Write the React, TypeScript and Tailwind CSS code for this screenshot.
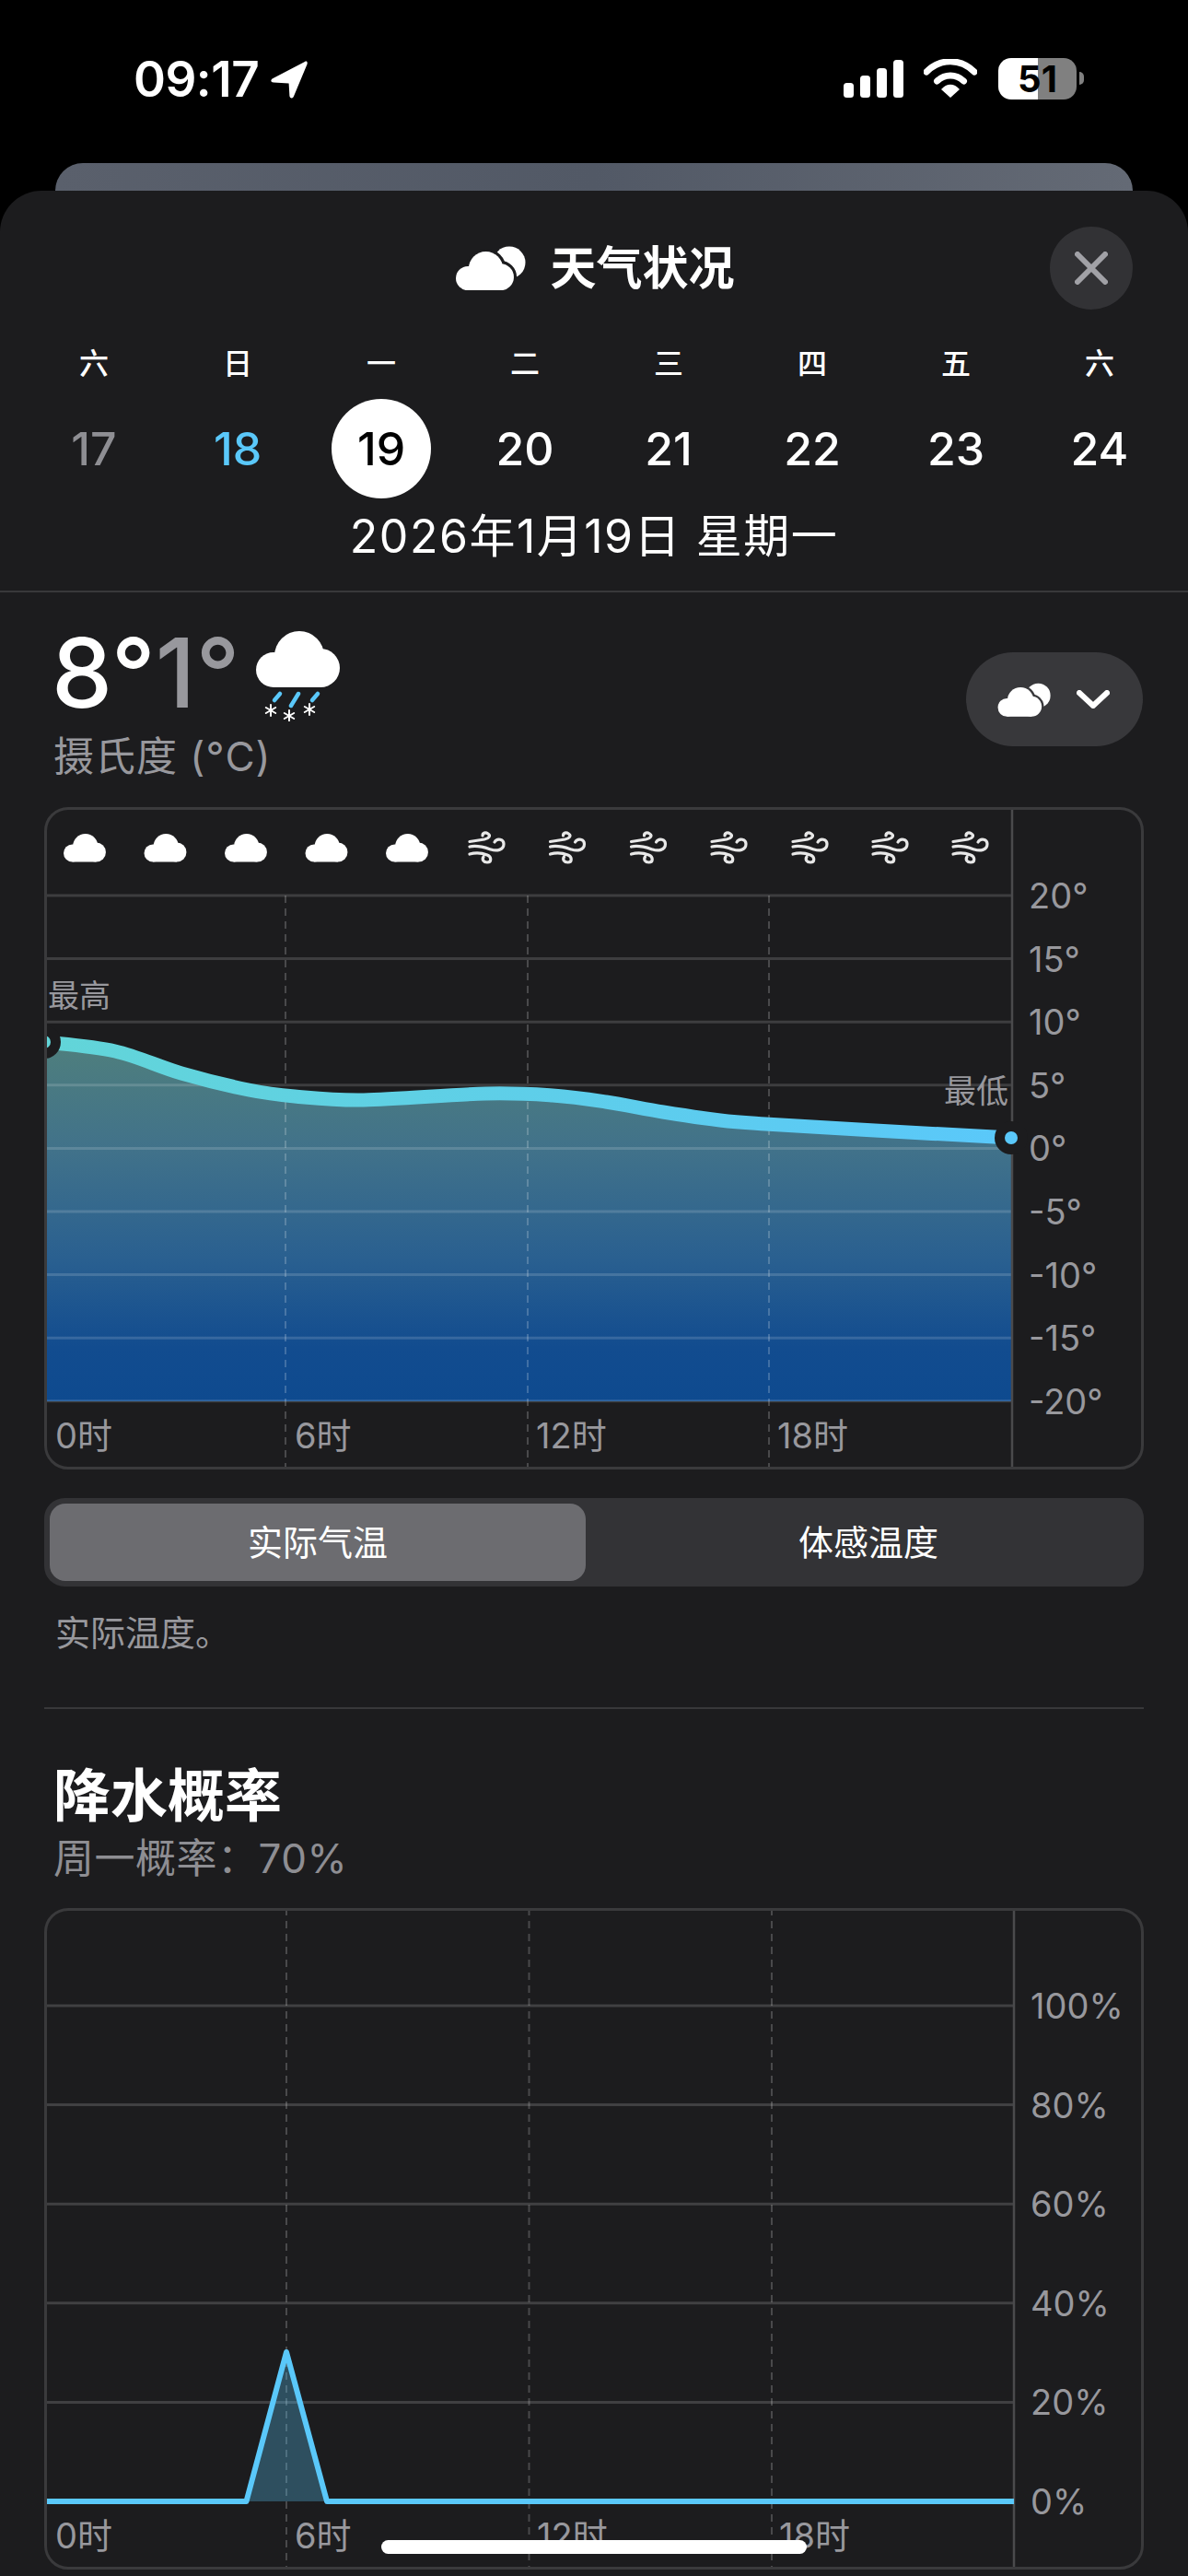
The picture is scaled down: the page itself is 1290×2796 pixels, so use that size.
const weekdays = ['六', '日', '一', '二', '三', '四', '五', '六'];
const days = [17, 18, 19, 20, 21, 22, 23, 24];

const tempLabels = ['20°', '15°', '10°', '5°', '0°', '-5°', '-10°', '-15°', '-20°'];
const rainLabels = ['100%', '80%', '60%', '40%', '20%', '0%'];

// hand read from the curve, page coordinates
const tempPoints: [number, number][] = [
  [48, 1131], [125, 1141], [197, 1165], [270, 1183], [320, 1190],
  [395, 1194], [527, 1187], [600, 1189], [658, 1196], [720, 1207], [782, 1216],
  [831, 1220], [950, 1227], [1098, 1235],
];

function smoothPath(pts: [number, number][]) {
  let d = `M${pts[0][0]} ${pts[0][1]}`;
  for (let i = 0; i < pts.length - 1; i++) {
    const p0 = pts[i - 1] ?? pts[i];
    const p1 = pts[i];
    const p2 = pts[i + 1];
    const p3 = pts[i + 2] ?? p2;
    const c1x = p1[0] + (p2[0] - p0[0]) / 6;
    const c1y = p1[1] + (p2[1] - p0[1]) / 6;
    const c2x = p2[0] - (p3[0] - p1[0]) / 6;
    const c2y = p2[1] - (p3[1] - p1[1]) / 6;
    d += ` C${c1x} ${c1y} ${c2x} ${c2y} ${p2[0]} ${p2[1]}`;
  }
  return d;
}

const tempLine = smoothPath(tempPoints);

function CloudParts(props: React.SVGProps<SVGGElement>) {
  return (
    <g {...props}>
      <circle cx="19" cy="42" r="19" />
      <circle cx="47" cy="27" r="27" />
      <circle cx="70" cy="40" r="21" />
      <rect x="19" y="30" width="51" height="31" />
    </g>
  );
}

function SunCloud({ className, gap }: { className: string; gap: string }) {
  return (
    <svg viewBox="0 0 78 48" className={className}>
      <circle cx="60" cy="18" r="17.5" fill="#fff" />
      <g transform="translate(2 6) scale(0.692)">
        <CloudParts fill={gap} stroke={gap} strokeWidth="9" />
        <CloudParts fill="#fff" />
      </g>
    </svg>
  );
}

function WindIcon({ x, y }: { x: number; y: number }) {
  return (
    <g transform={`translate(${x} ${y})`} fill="none" stroke="#e8e8e8" strokeWidth="3.2" strokeLinecap="round">
      <path d="M1 10.5 L17 8 C22 7 24 4 21 2 C18 0 15 1 15 4" />
      <path d="M1 16 C10 14 18 17 24 19 C30 21 38 20 38 13 C38 8 31 6 28 11" />
      <path d="M1 24 C8 22 15 23 20 25 C25 27 25 33 20 33 C16 33 14 30 16 27" />
    </g>
  );
}

function SnowFlake({ x, y }: { x: number; y: number }) {
  return (
    <g transform={`translate(${x} ${y})`} stroke="#fff" strokeWidth="2" strokeLinecap="round">
      <line x1="0" y1="-6" x2="0" y2="6" />
      <line x1="-5.2" y1="-3" x2="5.2" y2="3" />
      <line x1="-5.2" y1="3" x2="5.2" y2="-3" />
    </g>
  );
}

function TempChart() {
  return (
    <div className="mx-[48px] mt-0 h-[719px] rounded-[26px] border-[3px] border-[#3a3a3c] overflow-hidden">
      <svg viewBox="51 879 1187 713" className="block w-[1187px] h-[713px]">
        <defs>
          <linearGradient id="tempFill" gradientUnits="userSpaceOnUse" x1="0" y1="1130" x2="0" y2="1521">
            <stop offset="0" stopColor="#4f7f7d" />
            <stop offset="0.3" stopColor="#41728a" />
            <stop offset="0.6" stopColor="#2a6090" />
            <stop offset="0.85" stopColor="#124c8f" />
            <stop offset="1" stopColor="#0e4a8f" />
          </linearGradient>
          <linearGradient id="tempStroke" gradientUnits="userSpaceOnUse" x1="48" y1="0" x2="1098" y2="0">
            <stop offset="0" stopColor="#62d5d8" />
            <stop offset="1" stopColor="#5ac8fa" />
          </linearGradient>
        </defs>

        {[0, 1, 2, 3, 4].map((i) => (
          <g key={i} transform={`translate(${92 + i * 87.5 - 23} 905) scale(0.505 0.5)`}>
            <CloudParts fill="#fff" />
          </g>
        ))}
        {[529, 616.5, 704.5, 792, 880, 967, 1054].map((cx) => (
          <WindIcon key={cx} x={cx - 20} y={903} />
        ))}

        <path d={`${tempLine} L1098 1521 L48 1521 Z`} fill="url(#tempFill)" />

        {tempLabels.map((t, i) => (
          <g key={t}>
            <line x1="48" x2="1099" y1={972 + i * 68.6} y2={972 + i * 68.6} stroke="#fff" strokeOpacity="0.15" strokeWidth="3" />
            <text x="1117" y={972 + i * 68.6} dominantBaseline="central" fontSize="38" fill="#98989d">
              {t}
            </text>
          </g>
        ))}

        {[310, 573, 835].map((x) => (
          <line key={x} x1={x} x2={x} y1="972" y2="1595" stroke="#fff" strokeOpacity="0.2" strokeWidth="2" strokeDasharray="8 6" />
        ))}
        <line x1="1099" x2="1099" y1="876" y2="1595" stroke="#4a4a4c" strokeWidth="2.5" />

        <path d={tempLine} fill="none" stroke="url(#tempStroke)" strokeWidth="15" />

        <circle cx="48" cy="1131" r="18" fill="#1c1c1e" />
        <circle cx="48" cy="1131" r="7" fill="#62d5d8" />
        <circle cx="1098" cy="1235" r="18" fill="#1c1c1e" />
        <circle cx="1098" cy="1235" r="7" fill="#5ac8fa" />

        <text x="52" y="1080" dominantBaseline="central" fontSize="34" fill="#98989d">最高</text>
        <text x="1095" y="1184" dominantBaseline="central" textAnchor="end" fontSize="35" fill="#98989d">最低</text>

        <text x="60" y="1558" dominantBaseline="central" fontSize="38" fill="#98989d">0时</text>
        <text x="320" y="1558" dominantBaseline="central" fontSize="38" fill="#98989d">6时</text>
        <text x="582" y="1558" dominantBaseline="central" fontSize="38" fill="#98989d">12时</text>
        <text x="844" y="1558" dominantBaseline="central" fontSize="38" fill="#98989d">18时</text>
      </svg>
    </div>
  );
}

function RainChart() {
  return (
    <div className="mx-[48px] mt-[29px] h-[718px] rounded-[26px] border-[3px] border-[#3a3a3c] overflow-hidden">
      <svg viewBox="51 2074 1187 712" className="block w-[1187px] h-[712px]">
        {rainLabels.map((t, i) => (
          <g key={t}>
            {i < 5 && <line x1="48" x2="1101" y1={2177 + i * 107.6} y2={2177 + i * 107.6} stroke="#fff" strokeOpacity="0.16" strokeWidth="3" />}
            <text x="1119" y={2177 + i * 107.6} dominantBaseline="central" fontSize="38" fill="#98989d">
              {t}
            </text>
          </g>
        ))}
        {[311, 574.5, 838].map((x) => (
          <line key={x} x1={x} x2={x} y1="2071" y2="2789" stroke="#fff" strokeOpacity="0.2" strokeWidth="2" strokeDasharray="8 6" />
        ))}
        <line x1="1101" x2="1101" y1="2071" y2="2789" stroke="#4a4a4c" strokeWidth="2.5" />

        <path d="M267.5 2715 L311 2553 L355 2715 Z" fill="#5ac8fa" fillOpacity="0.3" />
        <path
          d="M48 2715 L267.5 2715 L311 2553 L355 2715 L1101 2715"
          fill="none"
          stroke="#5ac8fa"
          strokeWidth="6"
          strokeLinejoin="round"
        />

        <text x="60" y="2752" dominantBaseline="central" fontSize="38" fill="#98989d">0时</text>
        <text x="320" y="2752" dominantBaseline="central" fontSize="38" fill="#98989d">6时</text>
        <text x="583" y="2752" dominantBaseline="central" fontSize="38" fill="#98989d">12时</text>
        <text x="846" y="2752" dominantBaseline="central" fontSize="38" fill="#98989d">18时</text>
      </svg>
    </div>
  );
}

function StatusBar() {
  return (
    <div className="h-[177px] flex items-start justify-between pl-[145px] pr-[113px] pt-[59px]">
      <div className="flex items-center gap-[13px] h-[54px]">
        <span className="text-[53px] leading-[54px] font-semibold text-white tracking-[-0.5px]">09:17</span>
        <svg viewBox="0 0 40 41" className="w-[40px] h-[41px]">
          <path d="M37 1 C39 0 40 1 39.6 3.4 L25 38.5 C23.6 41.5 20.6 41 20.4 38 L19.6 24.4 L3 23.6 C0 23.4 -0.6 20.8 2 19.2 Z" fill="#fff" />
        </svg>
      </div>
      <div className="flex items-center h-[54px] -mt-[1px]">
        <svg viewBox="0 0 65 41" className="w-[65px] h-[41px] mr-[22px]">
          <rect x="0" y="25" width="11" height="16" rx="3.5" fill="#fff" />
          <rect x="18" y="17" width="11" height="24" rx="3.5" fill="#fff" />
          <rect x="36" y="9" width="11" height="32" rx="3.5" fill="#fff" />
          <rect x="54" y="0" width="11" height="41" rx="3.5" fill="#fff" />
        </svg>
        <svg viewBox="0 0 58 42" className="w-[58px] h-[42px] mr-[23px]">
          <path d="M3 14 C18 -1 40 -1 55 14" fill="none" stroke="#fff" strokeWidth="7" strokeLinecap="round" />
          <path d="M14.5 24 C23 16 35 16 43.5 24" fill="none" stroke="#fff" strokeWidth="7" strokeLinecap="round" />
          <path d="M19 33 C25 26 33 26 39 33 L29 42 Z" fill="#fff" />
        </svg>
        <div className="w-[85px] h-[45px] rounded-[14px] bg-[linear-gradient(90deg,#fff_43px,#808080_43px)] flex items-center justify-center">
          <span className="text-[40px] leading-[45px] font-bold text-black">51</span>
        </div>
        <div className="w-[5px] h-[14px] ml-[3px] rounded-r-full bg-[#808080]" />
      </div>
    </div>
  );
}

export default function App() {
  return (
    <div
      lang="zh-CN"
      className="relative w-[1290px] h-[2796px] bg-black overflow-hidden font-['Inter','Noto_Sans_CJK_SC',sans-serif]"
    >
      <StatusBar />
      <div className="mx-[60px] h-[30px] rounded-t-[30px] bg-gradient-to-r from-[#5a606c] via-[#525966] to-[#646a75]" />

      <div className="h-[2589px] rounded-t-[45px] bg-[#1c1c1e]">
        <div className="pt-[39px] grid grid-cols-[1fr_auto_1fr] items-center">
          <div />
          <div className="flex items-center gap-[27px]">
            <SunCloud className="w-[78px] h-[48px]" gap="#1c1c1e" />
            <span className="text-[50px] leading-[60px] font-semibold text-white">天气状况</span>
          </div>
          <div className="flex justify-end pr-[60px]">
            <div className="w-[90px] h-[90px] rounded-full bg-[#323235] flex items-center justify-center">
              <svg viewBox="0 0 36 36" className="w-[36px] h-[36px]">
                <path d="M3 3 L33 33 M33 3 L3 33" stroke="#a1a1a6" strokeWidth="6" strokeLinecap="round" />
              </svg>
            </div>
          </div>
        </div>

        <div className="ml-[24px] w-[1248px] mt-[39px] grid grid-cols-8">
          {weekdays.map((w, i) => (
            <div key={i} className="h-[40px] flex items-center justify-center text-[32px] font-medium text-white">
              {w}
            </div>
          ))}
        </div>
        <div className="ml-[24px] w-[1248px] mt-[18px] grid grid-cols-8">
          {days.map((d) => (
            <div key={d} className="h-[108px] flex items-center justify-center">
              {d === 17 && <span className="text-[50px] font-medium text-[#8e8e93]">{d}</span>}
              {d === 18 && <span className="text-[50px] font-medium text-[#5ac8fa]">{d}</span>}
              {d === 19 && (
                <span className="w-[108px] h-[108px] rounded-full bg-white flex items-center justify-center text-[50px] font-medium text-black">
                  {d}
                </span>
              )}
              {d > 19 && <span className="text-[50px] font-medium text-white">{d}</span>}
            </div>
          ))}
        </div>
        <div className="mt-[11px] h-[60px] flex items-center justify-center text-[50px] tracking-[1.5px] text-white">
          2026年1月19日 星期一
        </div>
        <div className="mt-[29px] h-[2px] bg-[#38383a]" />

        <div className="h-[233px] flex justify-between pl-[58px] pr-[49px]">
          <div className="pt-[37px]">
            <div className="h-[100px] flex items-start">
              <span className="text-[105px] leading-[100px] font-medium text-white ml-[-2px]">8°</span>
              <span className="text-[105px] leading-[100px] font-medium text-[#98989d]">1°</span>
              <svg viewBox="0 0 91 98" className="w-[91px] h-[98px] ml-[18px] mt-[5px]">
                <CloudParts fill="#fff" />
                <g stroke="#5ac8fa" strokeWidth="4.5" strokeLinecap="round">
                  <line x1="20" y1="75" x2="26" y2="68" />
                  <line x1="38" y1="81" x2="46" y2="68" />
                  <line x1="61" y1="75" x2="67" y2="68" />
                </g>
                <SnowFlake x={16} y={86} />
                <SnowFlake x={36} y={92} />
                <SnowFlake x={58} y={85} />
              </svg>
            </div>
            <div className="mt-[16px] h-[50px] flex items-center text-[44px] tracking-[1px] text-[#98989d]">摄氏度 (°C)</div>
          </div>
          <div className="mt-[65px] w-[192px] h-[102px] rounded-[51px] bg-[#38383b] flex items-center pl-[33px] gap-[28px]">
            <SunCloud className="w-[59px] h-[37px]" gap="#38383b" />
            <svg viewBox="0 0 36 20" className="w-[36px] h-[20px]">
              <path d="M3 3 L18 17 L33 3" fill="none" stroke="#fff" strokeWidth="6" strokeLinecap="round" strokeLinejoin="round" />
            </svg>
          </div>
        </div>

        <TempChart />

        <div className="mx-[48px] mt-[31px] h-[96px] rounded-[22px] bg-[#333336] flex p-[6px]">
          <div className="w-[582px] rounded-[17px] bg-[#6c6c70] flex items-center justify-center text-[38px] text-white">
            实际气温
          </div>
          <div className="flex-1 flex items-center justify-center pl-[14px] text-[38px] text-white">体感温度</div>
        </div>
        <div className="mt-[25px] ml-[60px] h-[50px] flex items-center text-[38px] text-[#98989d]">实际温度。</div>

        <div className="mx-[48px] mt-[56px] h-[2px] bg-[#38383a]" />

        <div className="mt-[54px] ml-[58px] h-[80px] flex items-center text-[62px] font-bold text-white">降水概率</div>
        <div className="mt-[3px] ml-[58px] h-[50px] flex items-center text-[44px] tracking-[0.5px] text-[#8e8e93]">周一概率：70%</div>

        <RainChart />
      </div>

      <div className="absolute left-[414px] top-[2757px] w-[462px] h-[15px] rounded-full bg-white" />
    </div>
  );
}
